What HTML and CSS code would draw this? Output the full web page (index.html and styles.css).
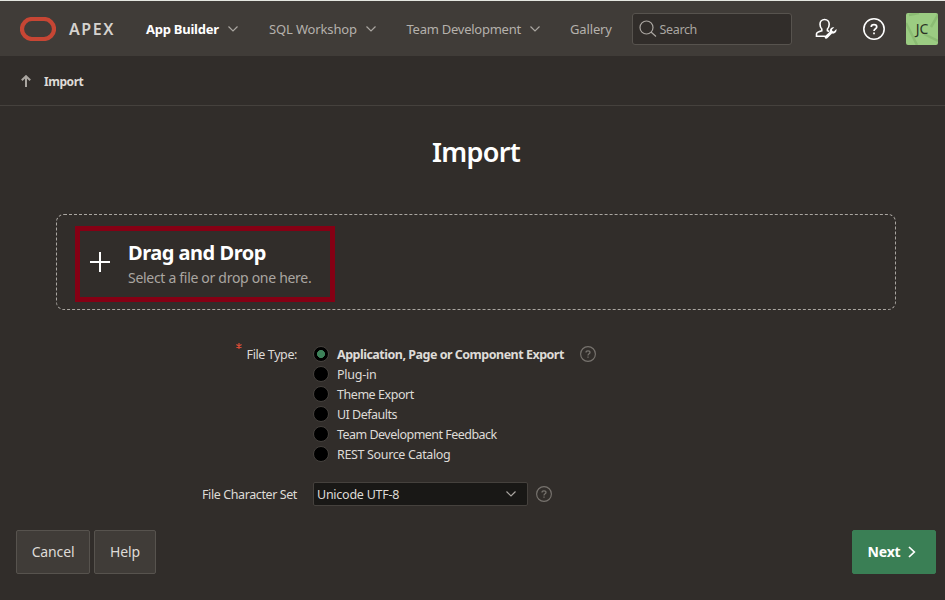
FILE: index.html
```html
<!DOCTYPE html>
<html lang="en">
<head>
<meta charset="utf-8">
<title>Import</title>
<link rel="stylesheet" href="styles.css">
</head>
<body>
<svg class="defs" width="0" height="0" aria-hidden="true">
  <symbol id="chevron" viewBox="0 0 10 6"><path d="M.5.5 5 5 9.500.5" fill="none" stroke="currentColor" stroke-width="1.2"/></symbol>
  <symbol id="help" viewBox="0 0 16 16"><circle cx="8" cy="8" r="7.4" fill="none" stroke="currentColor" stroke-width="1.150"/><path d="M6 6.500C6 4.300 10 4.300 10 6.500 10 7.900 8 7.700 8 9.500M8 10.600v1.200" fill="none" stroke="currentColor" stroke-width="1.250"/></symbol>
</svg>
<header class="header">
  <a class="logo"><svg width="36" height="24" viewBox="0 0 36 24"><rect x="2" y="2" width="32" height="20" rx="10" fill="none" stroke="#c74634" stroke-width="4.200"/></svg><span>APEX</span></a>
  <nav class="nav">
    <a class="item builder active"><span>App Builder</span><svg class="chev"><use href="#chevron"/></svg></a>
    <a class="item workshop"><span>SQL Workshop</span><svg class="chev"><use href="#chevron"/></svg></a>
    <a class="item team"><span>Team Development</span><svg class="chev"><use href="#chevron"/></svg></a>
    <a class="item gallery"><span>Gallery</span></a>
  </nav>
  <div class="search"><svg width="18" height="18" viewBox="0 0 18 18" fill="none" stroke="currentColor" stroke-width="1.200"><circle cx="7.500" cy="7.500" r="6.500"/><path d="m12 12 5 4.500"/></svg><span>Search</span></div>
  <svg class="admin" width="22" height="22" viewBox="0 0 22 22"><path d="M10.500 18.300H1.500V16c0-1.400 1.300-2.100 5.300-3.200V11C5.600 9.800 5 8.300 5 6.300 5 3.500 7 1.500 9.600 1.500s4.600 2 4.600 4.800c0 2-.6 3.600-1.800 4.700v1.800l2 .7" fill="none" stroke="currentColor" stroke-width="1.600"/><path d="M19.300 9.300 17 11.600l.3 1.500 1.600.4 2.500-2.400c.7 2.700-1.500 5.200-4.400 4.500l-4.700 4.700c-1.500 1.300-3.500-.6-2.200-2.200l4.900-4.700c-.6-2.600 1.700-4.800 4.300-4.100z" fill="currentColor"/></svg>
  <svg class="help-top"><use href="#help"/></svg>
  <div class="avatar"><svg width="32" height="32"><path d="M0 10 11 32M32 2 25 14M18 21 32 28M3 2 13 0" fill="none" stroke="#82b46c" stroke-width="2.500" opacity=".65"/></svg><span>JC</span></div>
</header>
<div class="breadcrumb"><svg width="10" height="12" viewBox="0 0 10 12"><path d="M5 12V1.500M.8 5.300 5 1.200l4.200 4.100" fill="none" stroke="currentColor" stroke-width="2"/></svg><span>Import</span></div>
<main class="main">
  <h1><span>Import</span></h1>
  <section class="drop">
    <div class="drop-target">
      <svg class="plus" width="20" height="20" viewBox="0 0 20 20"><path d="M10 0v20M0 10h20" stroke="#fff" stroke-width="2"/></svg>
      <div><h2><span>Drag and Drop</span></h2><p><span>Select a file or drop one here.</span></p></div>
    </div>
  </section>
  <form class="form">
    <div class="row">
      <div class="label"><svg class="required" width="6" height="6" viewBox="0 0 6 6"><path d="M3 0v6M.4 1.500l5.200 3M.4 4.500l5.200-3" stroke="#d64b36" stroke-width="1.200"/></svg><span>File Type:</span></div>
      <div class="options">
        <label class="option checked"><i></i><span>Application, Page or Component Export</span></label>
        <label class="option plugin"><i></i><span>Plug-in</span></label>
        <label class="option theme"><i></i><span>Theme Export</span></label>
        <label class="option defaults"><i></i><span>UI Defaults</span></label>
        <label class="option feedback"><i></i><span>Team Development Feedback</span></label>
        <label class="option catalog"><i></i><span>REST Source Catalog</span></label>
      </div>
      <svg class="help"><use href="#help"/></svg>
    </div>
    <div class="row charset">
      <div class="label"><span>File Character Set</span></div>
      <div class="select"><span>Unicode UTF-8</span><svg class="chev"><use href="#chevron"/></svg></div>
      <svg class="help"><use href="#help"/></svg>
    </div>
  </form>
</main>
<footer class="footer">
  <button class="btn cancel"><span>Cancel</span></button>
  <button class="btn helpbtn"><span>Help</span></button>
  <button class="btn next"><span>Next</span><svg width="8" height="12" viewBox="0 0 8 12"><path d="m1 1 5.300 5L1 11" fill="none" stroke="currentColor" stroke-width="1.700"/></svg></button>
</footer>
</body>
</html>
```
FILE: styles.css
```css
* { box-sizing: border-box; }
body { margin: 0; height: 600px; overflow: hidden; background: #312d2a; color: #dedbd7; font: 12.5px/20px "Noto Sans", sans-serif; border-top: 1px solid #e4e6e0; display: flex; flex-direction: column; }
.defs { position: absolute; }
svg { display: block; flex: none; }
span { white-space: nowrap; }
h1, h2, p { margin: 0; }
.header { height: 55px; background: #403c38; display: flex; align-items: center; flex: none; }
.logo { width: 146px; padding-left: 20px; display: flex; align-items: center; gap: 13px; font-size: 16px; font-weight: 600; color: #d5d2ce; letter-spacing: 1.6px; flex: none; }
.nav { display: flex; width: 486px; flex: none; color: #b5b1ac; font-size: 13px; letter-spacing: -.14px; }
.item { display: flex; align-items: center; justify-content: space-between; flex: none; }
.builder { width: 92px; margin-right: 31px; letter-spacing: -.25px; }
.workshop { width: 107px; margin-right: 30.5px; }
.team { width: 133.5px; margin-right: 30px; letter-spacing: -.25px; }
.active { color: #fff; font-weight: 700; }
.chev { width: 10px; height: 6px; color: #aaa6a1; }
.search { width: 160px; height: 32px; flex: none; border: 1px solid #57534e; border-radius: 3px; background: #312d2a; display: flex; align-items: center; padding-left: 6px; gap: 2.5px; color: #aaa6a1; letter-spacing: -.35px; }
.search span { padding-top: 2px; }
.admin { margin-left: 23px; color: #fff; }
.help-top { width: 22px; height: 22px; margin-left: 26px; color: #fff; }
.avatar { width: 32px; height: 32px; margin-left: 21px; background: #9bcc82; border-radius: 2px; display: grid; place-items: center; color: #2a3325; font-size: 14px; flex: none; }
.avatar > * { grid-area: 1 / 1; }
.breadcrumb { height: 50px; flex: none; border-bottom: 1px solid #45413d; display: flex; align-items: center; gap: 13px; padding-left: 21px; font-weight: 700; color: #dedbd7; font-size: 12px; letter-spacing: -.45px; }
.breadcrumb span { padding-top: 2px; }
.breadcrumb svg { color: #aaa6a1; }
.main { padding: 26px 49px 0 56px; height: 424px; flex: none; }
h1 { font-size: 27px; line-height: 40px; font-weight: 650; color: #fff; text-align: center; letter-spacing: -.7px; }
.drop { margin-top: 42px; height: 96px; border: 1px dashed #aaa6a1; border-radius: 8px; padding: 11px 18px; }
.drop-target { width: 260px; height: 76px; border: 5px solid #850014; display: flex; align-items: center; padding-left: 10px; gap: 18px; }
.plus { margin-bottom: 4px; }
h2 { font-size: 20px; line-height: 28px; font-weight: 700; color: #fff; letter-spacing: -.48px; }
p { font-size: 14px; line-height: 22px; color: #aaa6a1; letter-spacing: -.3px; }
.form { margin-top: 35px; }
.row { display: flex; align-items: flex-start; }
.label { width: 257px; padding-right: 16px; display: flex; justify-content: flex-end; letter-spacing: -.4px; }
.required { margin: -2px 5px 0 0; }
.option { display: flex; align-items: center; height: 20px; gap: 8px; }
.options { width: 267px; }
.option i { width: 16px; height: 16px; margin-bottom: 2px; border-radius: 50%; background: #000; border: 1px solid #45413d; flex: none; }
.checked { font-weight: 700; letter-spacing: -.5px; }
.checked i { background: radial-gradient(circle, #3d8159 0 3.7px, #000 4.3px); }
.plugin { letter-spacing: -.25px; }
.theme { letter-spacing: -.45px; }
.defaults, .feedback { letter-spacing: -.52px; }
.catalog { letter-spacing: -.35px; }
.help { width: 16px; height: 16px; color: #77736e; margin-top: 1px; }
.charset { margin-top: 17px; align-items: center; }
.charset .label span, .select span { padding-top: 2px; }
.charset .help { margin: 0 0 1px; }
.select { width: 215px; height: 24px; background: #191816; border: 1px solid #45413d; border-radius: 2px; display: flex; justify-content: space-between; align-items: center; padding: 0 11px 0 3px; margin-right: 8px; letter-spacing: -.25px; }
.footer { display: flex; padding: 0 9px 0 16px; gap: 4px; }
.btn { height: 44px; border: 1px solid #57534e; border-radius: 2px; background: #403c38; color: #dedbd7; font: 14px/20px "Noto Sans", sans-serif; letter-spacing: -.15px; padding: 0; display: flex; align-items: center; justify-content: center; }
.cancel { width: 74px; }
.helpbtn { width: 62px; }
.next { width: 84px; margin-left: auto; background: #3a7f55; border-color: #3a7f55; color: #fff; font-weight: 700; gap: 7px; padding-right: 5px; }
```
